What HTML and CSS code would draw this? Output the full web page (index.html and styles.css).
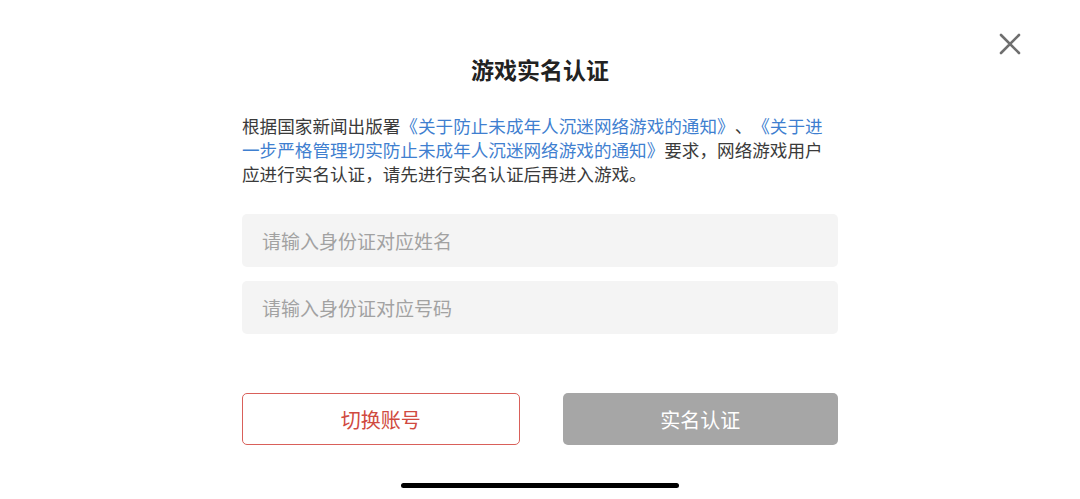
FILE: index.html
```html
<!DOCTYPE html>
<html lang="zh-CN">
<head>
<meta charset="utf-8">
<title>游戏实名认证</title>
<link rel="stylesheet" href="styles.css">
</head>
<body>
<div class="screen">
  <button class="close" aria-label="关闭">
    <svg width="24" height="24" viewBox="0 0 24 24"><path d="M3 3L21 21M21 3L3 21" stroke="#6f6f6f" stroke-width="2.6" stroke-linecap="round"/></svg>
  </button>
  <div class="panel">
    <h1 class="title">游戏实名认证</h1>
    <p class="desc">根据国家新闻出版署<span class="link">《关于防止未成年人沉迷网络游戏的通知》</span>、<span class="link">《关于进一步严格管理切实防止未成年人沉迷网络游戏的通知》</span>要求，网络游戏用户应进行实名认证，请先进行实名认证后再进入游戏。</p>
    <div class="fields">
      <div class="field">请输入身份证对应姓名</div>
      <div class="field">请输入身份证对应号码</div>
    </div>
    <div class="actions">
      <div class="btn btn-outline">切换账号</div>
      <div class="btn btn-gray">实名认证</div>
    </div>
  </div>
  <div class="home-indicator"></div>
</div>
</body>
</html>
```
FILE: styles.css
```css
html, body {
  margin: 0;
  padding: 0;
  background: #ffffff;
}
body {
  font-family: "Noto Sans CJK SC", "Noto Sans", sans-serif;
  color: #333333;
  text-spacing-trim: space-all;
  font-kerning: none;
}
.screen {
  position: relative;
  width: 1080px;
  height: 499px;
  overflow: hidden;
  display: flex;
  flex-direction: column;
  align-items: center;
}
.close {
  position: absolute;
  top: 32px;
  right: 58px;
  width: 24px;
  height: 24px;
  padding: 0;
  border: 0;
  background: none;
}
.close svg { display: block; }
.panel {
  width: 596px;
  padding-top: 54px;
  display: flex;
  flex-direction: column;
}
.title {
  margin: 0;
  font-size: 23px;
  line-height: 30px;
  font-weight: 700;
  text-align: center;
  color: #222222;
}
.desc {
  margin: 30px 0 0 0;
  font-size: 17.6px;
  line-height: 24px;
  color: #3a3a3a;
}
.link { color: #3f7fd0; }
.fields {
  margin-top: 28px;
  display: flex;
  flex-direction: column;
  gap: 14px;
}
.field {
  height: 53px;
  border-radius: 5px;
  background: #f4f4f4;
  padding-left: 20px;
  display: flex;
  align-items: center;
  font-size: 19px;
  color: #a2a2a2;
}
.actions {
  margin-top: 59px;
  display: flex;
  gap: 43px;
}
.btn {
  flex: 1;
  height: 52px;
  box-sizing: border-box;
  border-radius: 5px;
  display: flex;
  align-items: center;
  justify-content: center;
  font-size: 20px;
}
.btn-outline {
  border: 1.5px solid #d9605a;
  color: #d04a40;
  background: #ffffff;
}
.btn-gray {
  background: #a6a6a6;
  color: #ffffff;
}
.home-indicator {
  margin-top: 38px;
  width: 278px;
  height: 5px;
  border-radius: 3px;
  background: #000000;
}
```
